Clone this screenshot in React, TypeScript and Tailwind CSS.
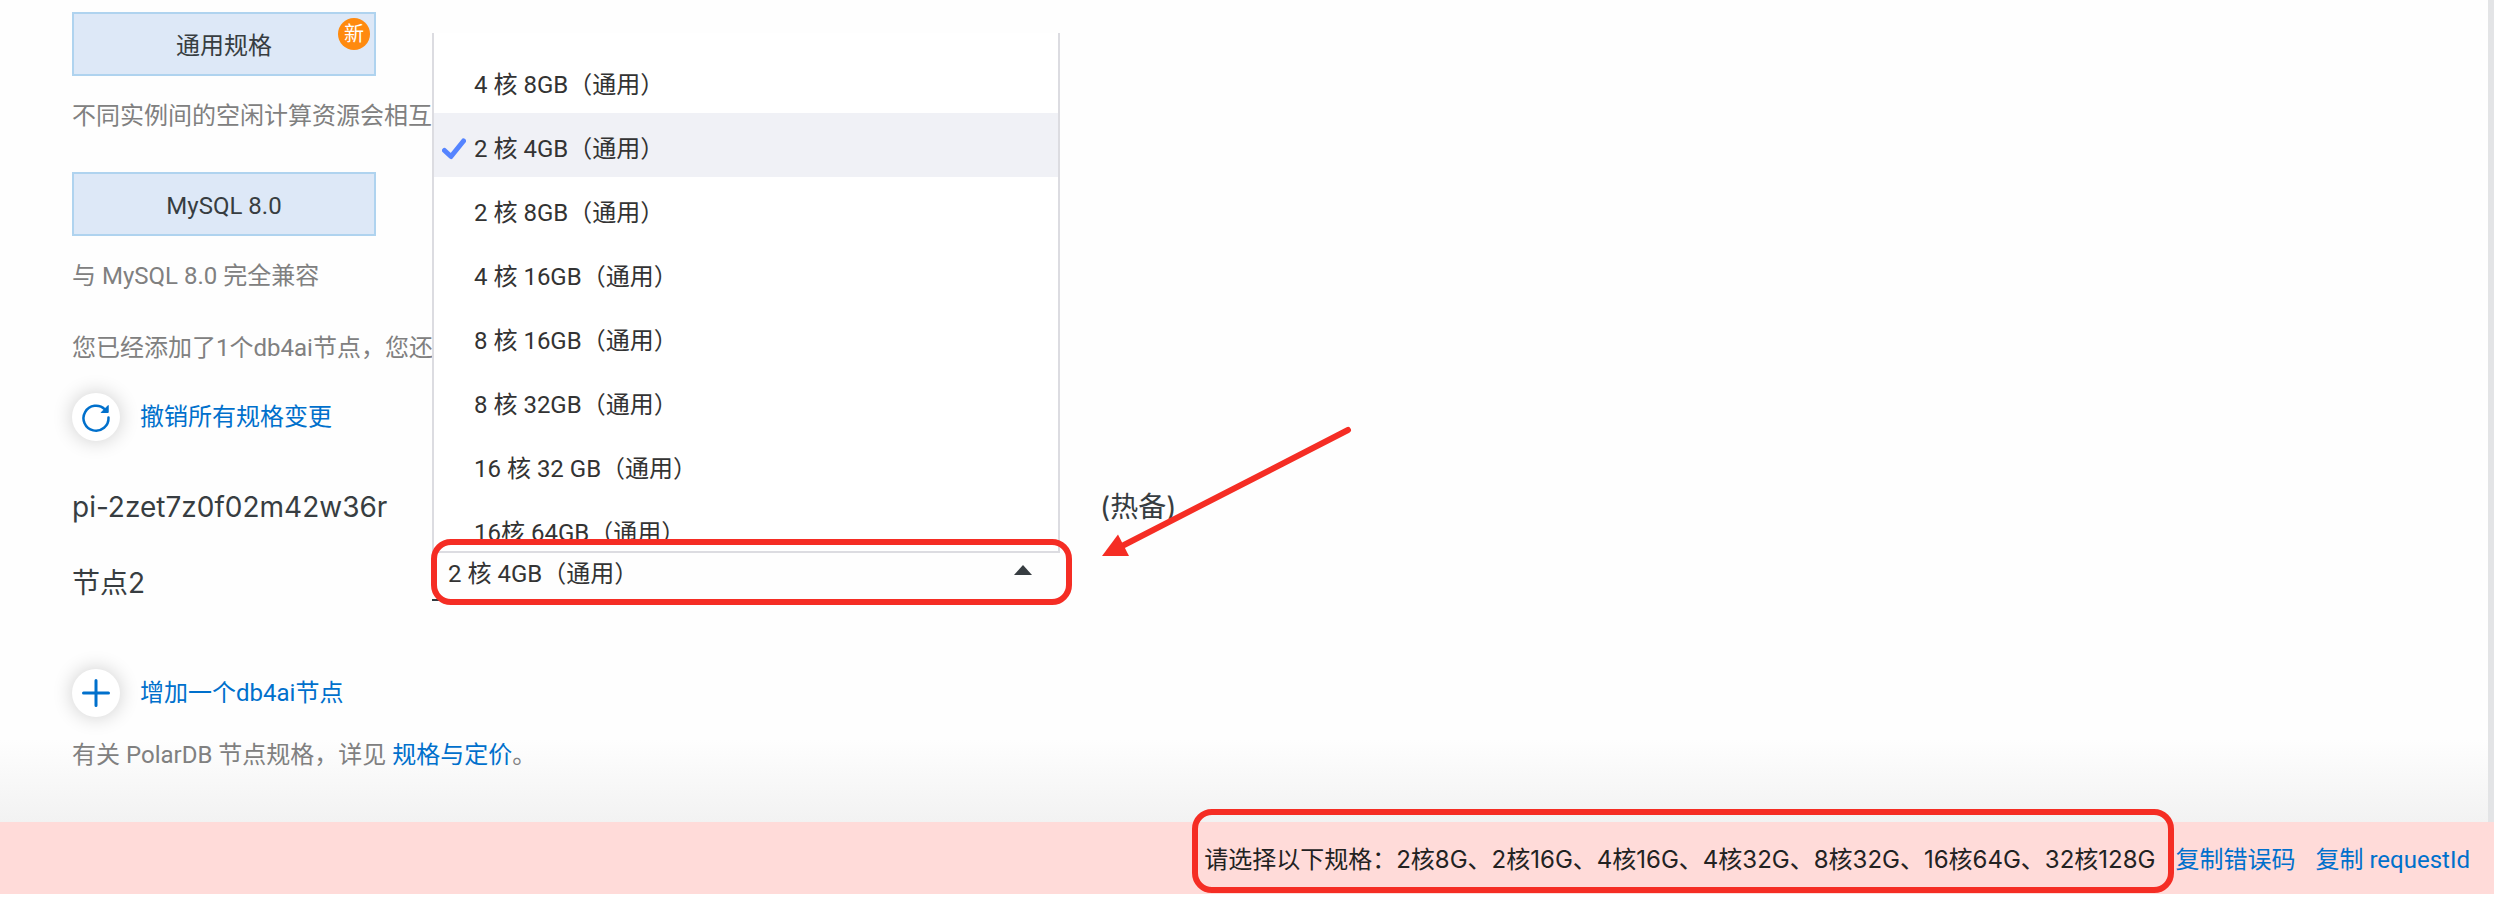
import React from 'react';

interface Spec {
  value: string;
  label: string;
}

const specs: Spec[] = [
  { value: '4c8g', label: '4 核 8GB（通用）' },
  { value: '2c4g', label: '2 核 4GB（通用）' },
  { value: '2c8g', label: '2 核 8GB（通用）' },
  { value: '4c16g', label: '4 核 16GB（通用）' },
  { value: '8c16g', label: '8 核 16GB（通用）' },
  { value: '8c32g', label: '8 核 32GB（通用）' },
  { value: '16c32g', label: '16 核 32 GB（通用）' },
  { value: '16c64g', label: '16核 64GB（通用）' },
];

const selected = '2c4g';

const CheckIcon = () => (
  <svg viewBox="0 0 24 24" className="w-6 h-6" fill="none" stroke="#5584ff" strokeWidth="5" strokeLinecap="round" strokeLinejoin="round">
    <path d="M2.5 13.5L9 19.5L21.5 4" />
  </svg>
);

const ReloadIcon = () => (
  <svg viewBox="0 0 28 28" className="w-7 h-7 overflow-visible">
    <path d="M23 6.5A12.5 12.5 0 1 0 26.5 14.5" fill="none" stroke="#0070cc" strokeWidth="2.5" strokeLinecap="round" />
    <path d="M26.2 2.5V9.5H19.2Z" fill="#0070cc" stroke="#0070cc" strokeLinejoin="round" />
  </svg>
);

const PlusIcon = () => (
  <svg viewBox="0 0 28 28" className="w-7 h-7" stroke="#0070cc" strokeWidth="3" strokeLinecap="round">
    <path d="M14 1.5V26.5M1.5 14H26.5" />
  </svg>
);

interface RoundActionProps {
  icon: React.ReactNode;
  label: string;
}

const RoundAction: React.FC<RoundActionProps> = ({ icon, label }) => (
  <button type="button" className="flex items-center gap-5 h-12 text-[#0070cc]">
    <span className="w-12 h-12 rounded-full bg-white flex items-center justify-center shadow-[0_0_20px_rgba(0,0,0,0.2)]">
      {icon}
    </span>
    {label}
  </button>
);

const SpecSelect = () => (
  <div className="relative w-[628px] h-12">
    <button type="button" className="w-full h-full flex items-center justify-between pl-4 pr-7 pb-1 border-b-2 border-[#333b40] text-[#333]">
      <span>2 核 4GB（通用）</span>
      <svg viewBox="0 0 18 10" className="w-[18px] h-[10px] mb-2">
        <path d="M0 10L9 0L18 10Z" fill="#373d41" />
      </svg>
    </button>

    <div className="absolute left-0 bottom-full w-full h-[520px] pt-4 pb-2 bg-white border-x-2 border-b-2 border-[#dcdce1]">
      <ul className="h-full overflow-hidden text-[#333]">
        {specs.map((spec) => (
          <li
            key={spec.value}
            className={
              spec.value === selected
                ? 'h-16 flex items-center pl-2 pt-2 bg-[#f0f1f6]'
                : 'h-16 flex items-center pl-2 pt-2'
            }
          >
            <span className="w-8">{spec.value === selected && <CheckIcon />}</span>
            {spec.label}
          </li>
        ))}
      </ul>
    </div>

    {/* highlight around the trigger, with the pointer arrow */}
    <div className="absolute -left-px -top-[14px] w-[641px] h-[66px] border-[6px] border-[#f52d24] rounded-[20px]" />
    <svg viewBox="0 0 260 140" className="absolute left-[664px] -top-[130px] w-[260px] h-[140px]">
      <path d="M252 7L28 122" stroke="#f52d24" strokeWidth="6" strokeLinecap="round" />
      <path d="M6 133L22 111.5L33 133Z" fill="#f52d24" />
    </svg>
  </div>
);

export default function App() {
  return (
    <div className="min-h-screen flex flex-col bg-white font-[Roboto,'Noto_Sans_CJK_SC',sans-serif] text-[24px] leading-9 whitespace-nowrap">
      <main className="border-r-[6px] border-[#e3e4e6] pl-[72px] pt-3 pb-[49px] bg-linear-to-b from-[#fefefe] from-90% to-[#f2f2f2]">
        <button type="button" className="relative block w-[304px] h-16 pt-1 bg-[#dde8f7] border-2 border-[#afd3ef] text-[#373d41]">
          通用规格
          <span className="absolute right-1 top-1 w-8 h-8 rounded-full bg-[#ff8a0f] text-white text-[20px] leading-8">
            新
          </span>
        </button>
        <p className="mt-[22px] text-[#808080]">不同实例间的空闲计算资源会相互</p>

        <button type="button" className="block mt-[38px] w-[304px] h-16 pt-1 bg-[#dde8f7] border-2 border-[#afd3ef] text-[#373d41]">
          MySQL 8.0
        </button>
        <p className="mt-[22px] text-[#808080]">与 MySQL 8.0 完全兼容</p>
        <p className="mt-9 mb-[27px] text-[#808080]">您已经添加了1个db4ai节点，您还</p>

        <RoundAction icon={<ReloadIcon />} label="撤销所有规格变更" />

        <div className="mt-12 flex font-[Inter,'Noto_Sans_CJK_SC',sans-serif] text-[28px] text-[#373d41]">
          <span className="w-[1028px]">pi-2zet7z0f02m42w36r</span>
          <span>(热备)</span>
        </div>
        <div className="mt-7 flex">
          <span className="w-[360px] pt-3 font-[Inter,'Noto_Sans_CJK_SC',sans-serif] text-[28px] text-[#373d41]">节点2</span>
          <SpecSelect />
        </div>

        <div className="mt-[68px]">
          <RoundAction icon={<PlusIcon />} label="增加一个db4ai节点" />
        </div>
        <p className="mt-5 text-[#808080]">
          有关 PolarDB 节点规格，详见 <a href="#pricing" className="text-[#0070cc]">规格与定价</a>。
        </p>
      </main>

      <footer className="h-[72px] flex items-center justify-end pr-6 pt-1 bg-[#ffdbd9] text-[#222]">
        <div className="relative mr-5 font-[Inter,'Noto_Sans_CJK_SC',sans-serif]">
          请选择以下规格：2核8G、2核16G、4核16G、4核32G、8核32G、16核64G、32核128G
          <div className="absolute -left-3 -right-[18px] -top-[33px] h-[84px] border-[6px] border-[#f52d24] rounded-[20px]" />
        </div>
        <div className="flex gap-5 text-[#0070cc]">
          <button type="button">复制错误码</button>
          <button type="button">复制 requestId</button>
        </div>
      </footer>
    </div>
  );
}
